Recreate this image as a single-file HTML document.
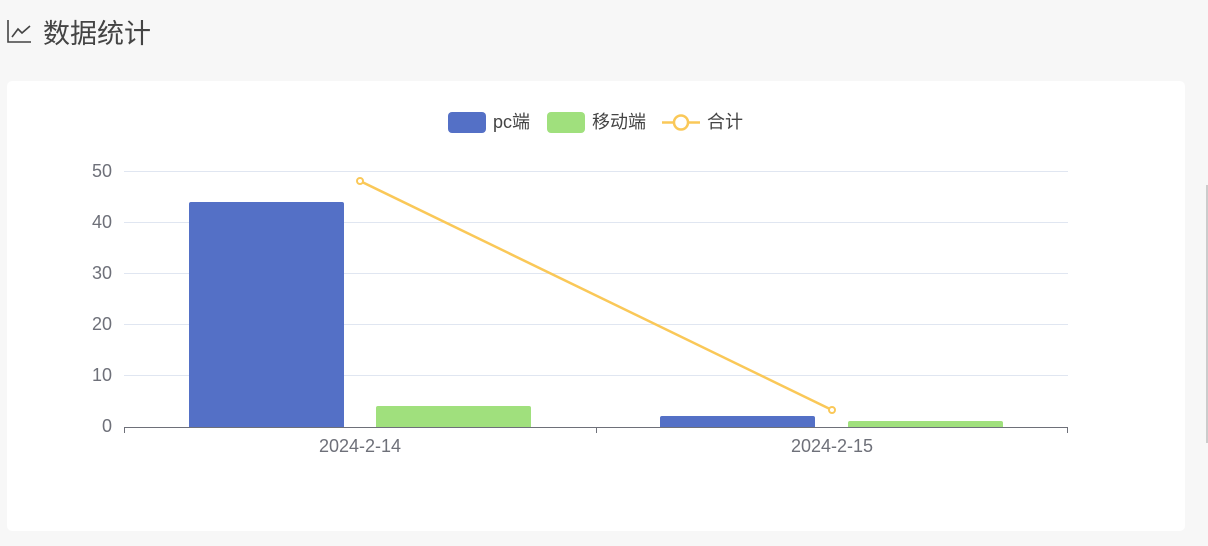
<!DOCTYPE html>
<html><head><meta charset="utf-8"><style>
body{margin:0;width:1208px;height:546px;background:#f7f7f7;font-family:"Liberation Sans","Noto Sans CJK SC",sans-serif;overflow:hidden;position:relative}
.title{position:absolute;left:43px;top:12px;font-size:27px;color:#444}
.card{position:absolute;left:7px;top:81px;width:1178px;height:450px;background:#fff;border-radius:5px}
</style></head><body>
<svg style="position:absolute;left:6px;top:18px" width="28" height="26"><path d="M2 2V24H25" stroke="#444" stroke-width="1.6" fill="none"/><path d="M6 19L12 11L16 15L24 8" stroke="#444" stroke-width="1.6" fill="none"/></svg>
<div class="title">数据统计</div>
<div class="card"></div>
<div style="position:absolute;left:1206px;top:185px;width:2px;height:258px;background:#ccc"></div>
<svg style="position:absolute;left:0;top:0" width="1208" height="546" font-family="Liberation Sans, Noto Sans CJK SC, sans-serif">
<g stroke="#e0e6f1" stroke-width="1">
<line x1="124" y1="171.5" x2="1068" y2="171.5"/><line x1="124" y1="222.5" x2="1068" y2="222.5"/><line x1="124" y1="273.5" x2="1068" y2="273.5"/><line x1="124" y1="324.5" x2="1068" y2="324.5"/><line x1="124" y1="375.5" x2="1068" y2="375.5"/>
</g>
<g fill="#6e7079" font-size="18" text-anchor="end">
<text x="112" y="177">50</text><text x="112" y="228">40</text><text x="112" y="279">30</text><text x="112" y="330">20</text><text x="112" y="381">10</text><text x="112" y="432">0</text>
</g>
<path d="M189 427V204a2 2 0 0 1 2-2h151a2 2 0 0 1 2 2V427Z" fill="#5470c6"/>
<path d="M376 427V408a2 2 0 0 1 2-2h151a2 2 0 0 1 2 2V427Z" fill="#a0e07d"/>
<path d="M660 427V418a2 2 0 0 1 2-2h151a2 2 0 0 1 2 2V427Z" fill="#5470c6"/>
<path d="M848 427V423a2 2 0 0 1 2-2h151a2 2 0 0 1 2 2V427Z" fill="#a0e07d"/>
<g stroke="#6e7079" stroke-width="1"><line x1="124" y1="427.5" x2="1068" y2="427.5"/><line x1="124.5" y1="427" x2="124.5" y2="433"/><line x1="596.5" y1="427" x2="596.5" y2="433"/><line x1="1067.5" y1="427" x2="1067.5" y2="433"/></g>
<g fill="#6e7079" font-size="18" text-anchor="middle"><text x="360" y="452">2024-2-14</text><text x="832" y="452">2024-2-15</text></g>
<line x1="360" y1="181" x2="832" y2="410" stroke="#fac858" stroke-width="2.5"/>
<circle cx="360" cy="181" r="3" fill="#fff" stroke="#fac858" stroke-width="2"/>
<circle cx="832" cy="410" r="3" fill="#fff" stroke="#fac858" stroke-width="2"/>
<rect x="448" y="112" width="38" height="21" rx="4" fill="#5470c6"/>
<text x="493" y="128" font-size="18" fill="#444">pc端</text>
<rect x="547" y="112" width="38" height="21" rx="4" fill="#a0e07d"/>
<text x="592" y="128" font-size="18" fill="#444">移动端</text>
<line x1="662" y1="122.5" x2="700" y2="122.5" stroke="#fac858" stroke-width="2.5"/>
<circle cx="681" cy="122.5" r="7" fill="#fff" stroke="#fac858" stroke-width="2.5"/>
<text x="707" y="128" font-size="18" fill="#444">合计</text>
</svg>
</body></html>
